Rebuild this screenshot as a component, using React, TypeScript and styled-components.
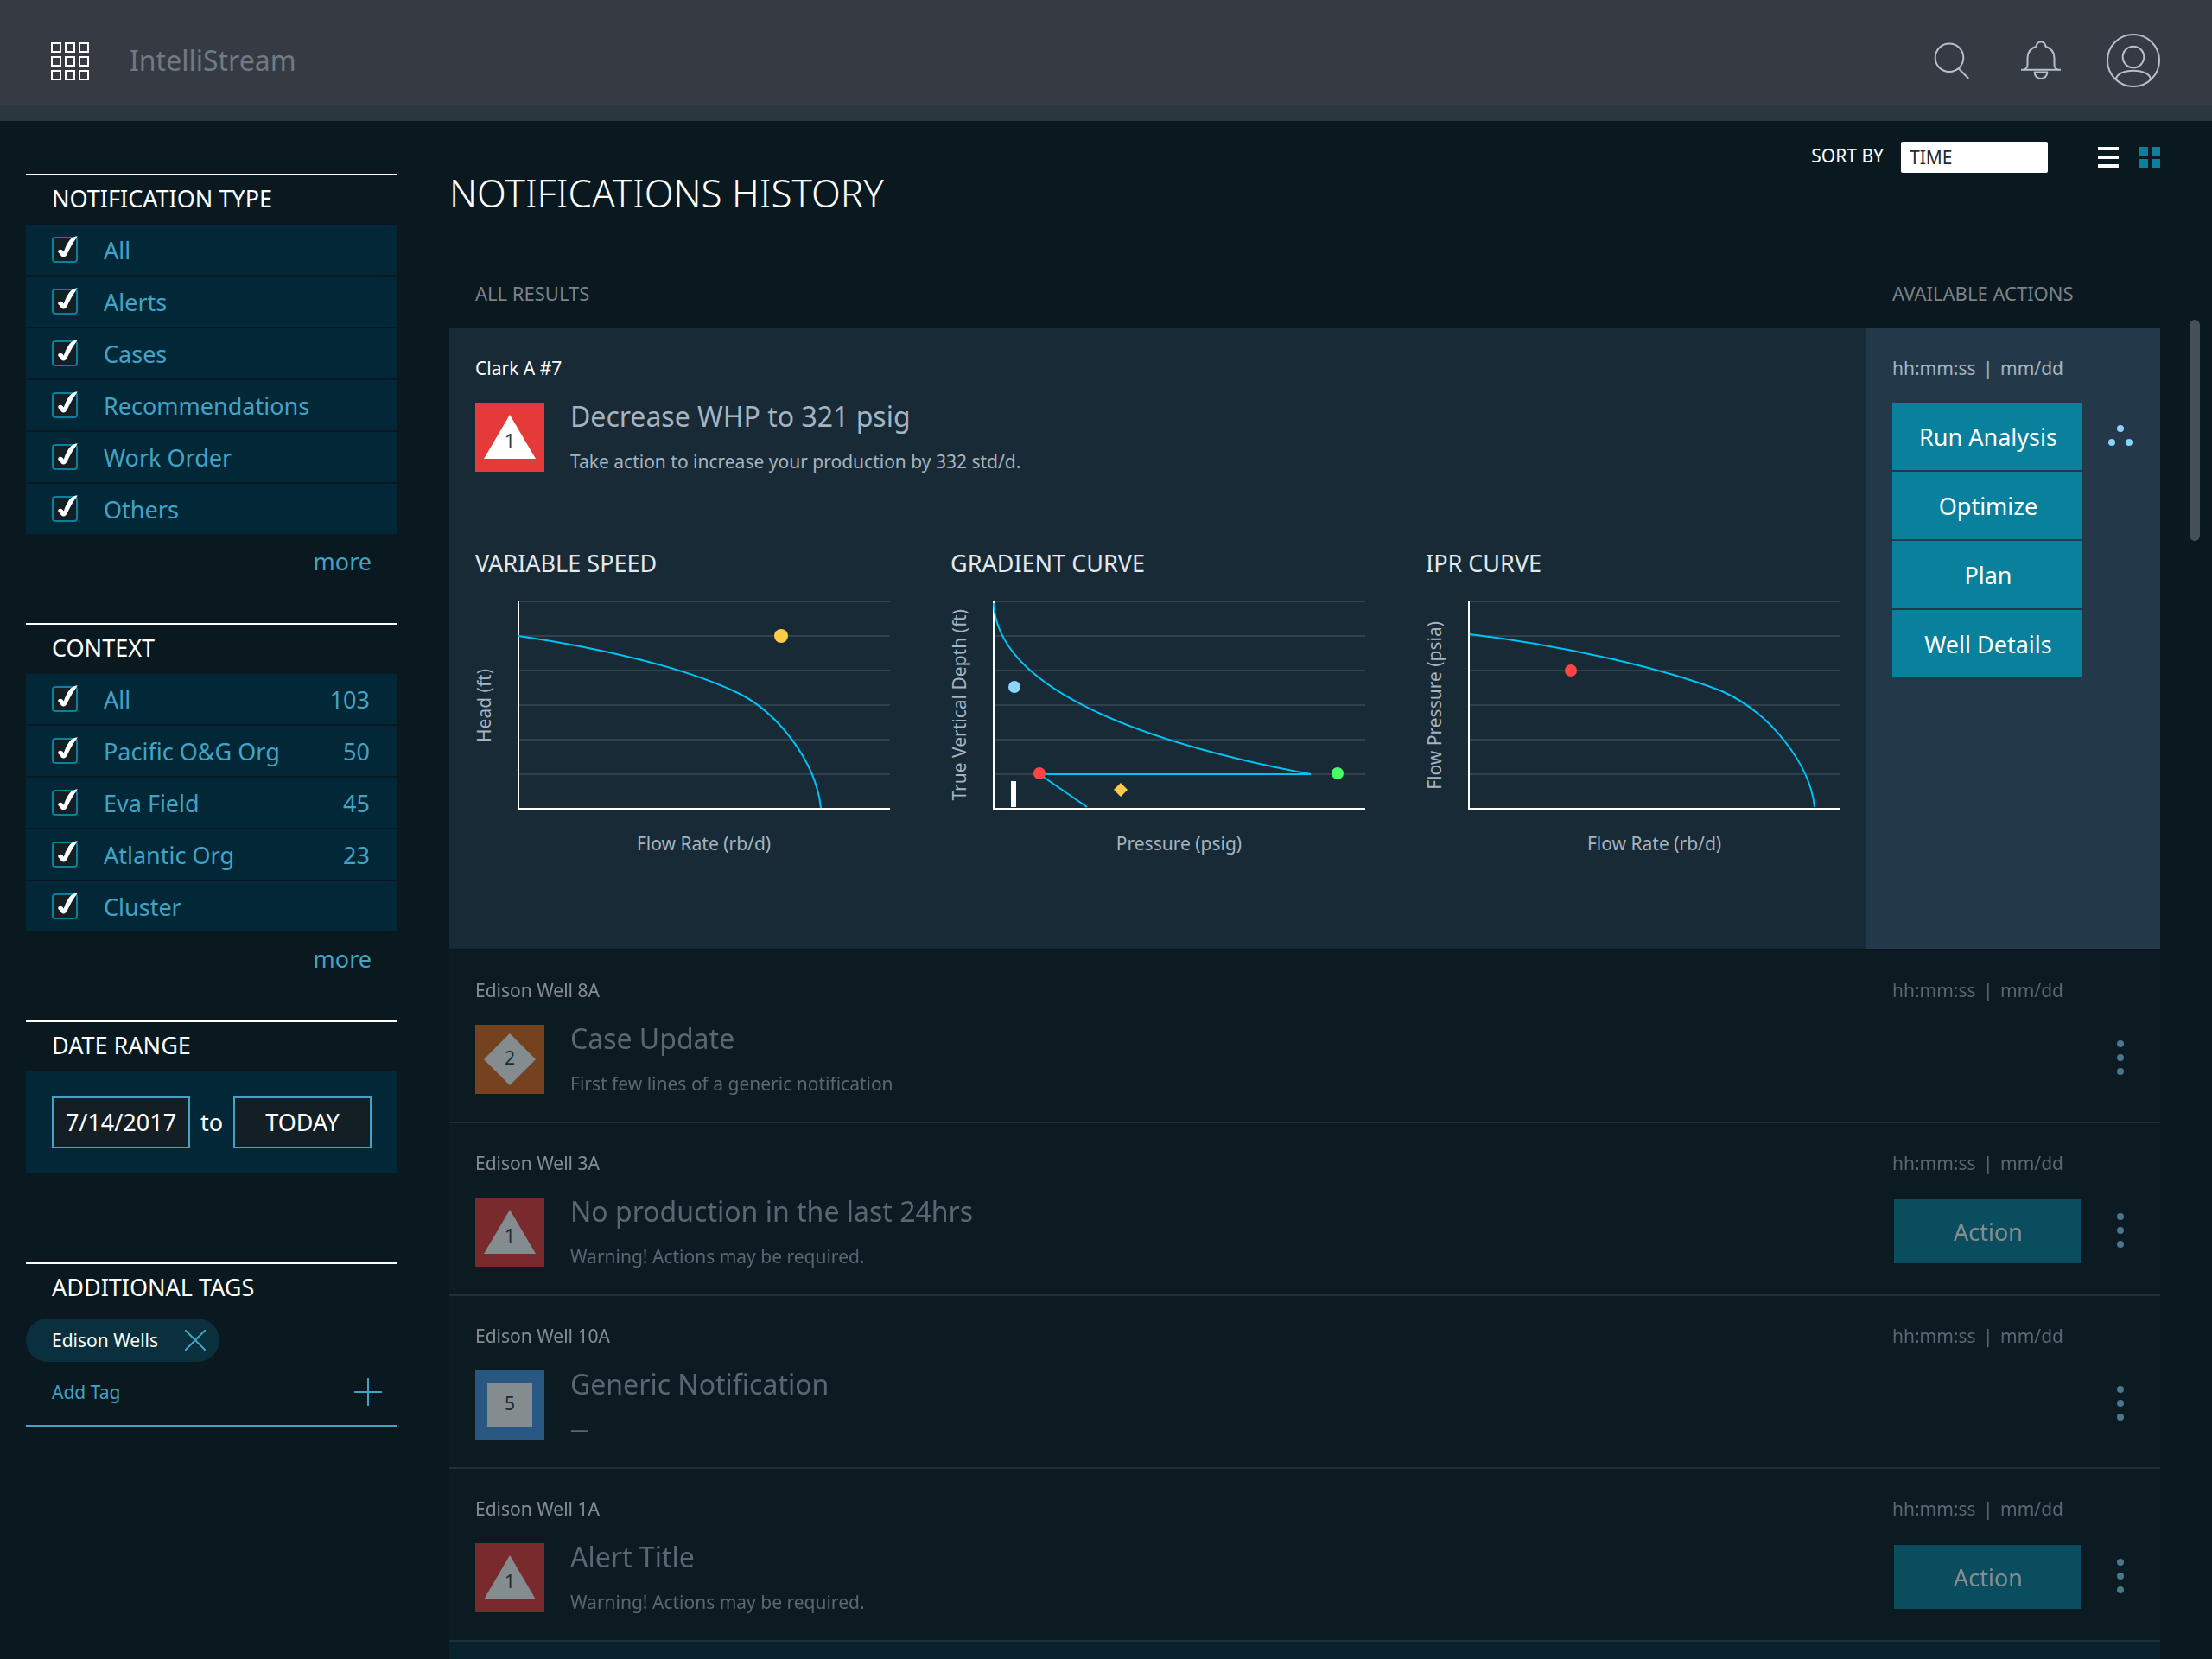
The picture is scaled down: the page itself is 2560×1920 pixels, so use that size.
import React from "react";
import styled, { createGlobalStyle } from "styled-components";

const color = {
  page: "#0a1820",
  row: "#0c1a21",
  line: "#1f2f3a",
  panel: "#022838",
  blue: "#42a3c5",
  teal: "#09809c",
  featured: "#182a36",
  featuredSide: "#23394a",
  muted: "#a5b4c0",
  heading: "#7c8287",
};

const GlobalStyle = createGlobalStyle`
  *, *::before, *::after { box-sizing: border-box; }
  body {
    margin: 0;
    background: ${color.page};
    color: #fff;
    font-family: "Noto Sans", "Open Sans", sans-serif;
    font-size: 21px;
    line-height: 32px;
  }
  button, input, select { font: inherit; color: inherit; }
  button { background: none; border: 0; padding: 0; cursor: pointer; }
  h1, h2, h3, p, ul { margin: 0; padding: 0; font-weight: 400; }
  ul { list-style: none; }
  a { color: inherit; text-decoration: none; }
  svg { display: block; }
`;

/* ---------- shell ---------- */

const Shell = styled.div`
  display: flex;
  flex-direction: column;
  min-height: 100vh;
`;

const TopBar = styled.header`
  display: flex;
  align-items: center;
  height: 140px;
  padding: 0 60px 0 59px;
  background: #363a42;
  border-bottom: 18px solid #2c3840;
`;

const Brand = styled.span`
  margin-left: 47px;
  padding-top: 18px;
  font-size: 32px;
  color: #6f7a81;
`;

const TopActions = styled.nav`
  display: flex;
  align-items: center;
  gap: 53px;
  margin-left: auto;
  padding-top: 18px;
`;

const AppsButton = styled.button`
  padding-top: 20px;
`;

const Body = styled.div`
  flex: 1;
  display: flex;
  gap: 60px;
  padding-left: 30px;
`;

/* ---------- sidebar ---------- */

const Sidebar = styled.aside`
  flex: none;
  width: 430px;
  padding-top: 61px;
`;

const Section = styled.section<{ $gap: number }>`
  border-top: 2px solid #fff;
  margin-bottom: ${(p) => p.$gap}px;
`;

const SectionTitle = styled.h2`
  height: 57px;
  padding: 11px 30px 0;
  font-size: 27px;
  color: #fff;
`;

const FilterList = styled.ul`
  display: grid;
  gap: 2px;
`;

const FilterRow = styled.label`
  display: flex;
  align-items: center;
  height: 58px;
  padding: 0 32px 0 30px;
  background: ${color.panel};
  color: ${color.blue};
  font-size: 27px;
  cursor: pointer;
`;

const FilterText = styled.span`
  padding-top: 2px;
`;

const FilterName = styled(FilterText)`
  flex: 1;
  margin-left: 30px;
`;

const CheckWrap = styled.span`
  position: relative;
  width: 30px;
  height: 30px;

  svg {
    position: absolute;
    inset: 0;
    overflow: visible;
    pointer-events: none;
  }
  input:not(:checked) + svg { display: none; }
`;

const Check = styled.input`
  appearance: none;
  display: block;
  width: 30px;
  height: 30px;
  margin: 0;
  border: 2px solid ${color.teal};
  border-radius: 4px;
  background: #141e25;
`;

const MoreRow = styled.div`
  display: flex;
  align-items: center;
  justify-content: flex-end;
  height: 62px;
  padding: 2px 30px 0;
  font-size: 27px;
  color: ${color.blue};
`;

const DatePanel = styled.div`
  display: flex;
  align-items: center;
  justify-content: space-between;
  padding: 29px 30px;
  background: ${color.panel};
  font-size: 27px;
`;

const DateInput = styled.input`
  width: 160px;
  height: 60px;
  padding: 0 0 2px;
  border: 2px solid ${color.blue};
  border-radius: 0;
  background: #141e25;
  text-align: center;
`;

const Tag = styled.span`
  display: inline-flex;
  align-items: center;
  gap: 31px;
  height: 50px;
  margin-top: 6px;
  padding: 0 16px 0 30px;
  border-radius: 25px;
  background: #0b303d;
`;

const AddTag = styled.button`
  display: flex;
  align-items: center;
  justify-content: space-between;
  width: 100%;
  height: 75px;
  padding: 0 18px 4px 30px;
  border-bottom: 2px solid ${color.blue};
  color: ${color.blue};
`;

/* ---------- main ---------- */

const Main = styled.main`
  flex: 1;
  display: flex;
  gap: 34px;
  padding: 24px 14px 0 0;
`;

const Content = styled.div`
  flex: 1;
  display: flex;
  flex-direction: column;
`;

const TitleRow = styled.div`
  display: flex;
  align-items: flex-start;
  justify-content: space-between;
`;

const PageTitle = styled.h1`
  margin-top: 32px;
  font-size: 44px;
  font-weight: 300;
  line-height: 54px;
`;

const Tools = styled.div`
  display: flex;
  align-items: center;
  height: 36px;
`;

const SortLabel = styled.label`
  padding-bottom: 4px;
`;

const SortSelect = styled.select`
  appearance: none;
  width: 170px;
  height: 36px;
  margin: 0 58px 0 20px;
  padding: 0 10px;
  border: 0;
  border-radius: 2px;
  background: #fff;
  color: #1b2a33;
`;

const ViewButton = styled.button<{ $active?: boolean }>`
  color: ${(p) => (p.$active ? color.teal : "#fff")};
  & + & { margin-left: 24px; }
`;

const ColumnHeads = styled.div`
  display: grid;
  grid-template-columns: 1fr 340px;
  padding: 73px 0 25px;
  font-size: 22px;
  color: ${color.heading};

  span { padding-left: 30px; }
`;

const ScrollTrack = styled.div`
  width: 12px;
  padding-top: 206px;
`;

const ScrollThumb = styled.div`
  height: 256px;
  border-radius: 6px;
  background: #454f56;
`;

const List = styled.ul`
  flex: 1;
  display: flex;
  flex-direction: column;
`;

const Item = styled.li<{ $featured?: boolean }>`
  background: ${(p) => (p.$featured ? color.featured : color.row)};
  border-bottom: 2px solid ${(p) => (p.$featured ? "#09161d" : color.line)};
`;

const ItemGrid = styled.article<{ $featured?: boolean }>`
  display: grid;
  grid-template-columns: 1fr 340px;
  opacity: ${(p) => (p.$featured ? 1 : 0.5)};
`;

const Details = styled.div`
  padding: 30px 30px 28px;
`;

const Source = styled.p`
  margin-bottom: 24px;
`;

const Summary = styled.div`
  display: flex;
  gap: 30px;
`;

const SummaryTitle = styled.h2`
  margin-bottom: 20px;
  font-size: 32px;
  color: ${color.muted};
`;

const SummaryText = styled.p`
  color: ${color.muted};
`;

const Actions = styled.div<{ $featured?: boolean }>`
  padding: 30px 2px 0 30px;
  background: ${(p) => (p.$featured ? color.featuredSide : "none")};
`;

const Stamp = styled.p`
  margin-bottom: 24px;
  color: ${color.muted};
`;

const Bar = styled.span`
  margin: 0 3px;
`;

const ActionRow = styled.div`
  display: flex;
  justify-content: space-between;
`;

const ButtonStack = styled.div`
  display: grid;
  gap: 2px;
  width: 220px;
`;

const ActionButton = styled.button<{ $outlined?: boolean }>`
  height: 78px;
  padding: 2px 0 0 2px;
  background: ${color.teal};
  border: ${(p) => (p.$outlined ? `2px solid ${color.row}` : "0")};
  font-size: 27px;
`;

const MenuButton = styled.button`
  display: grid;
  place-items: center;
  width: 88px;
  height: 78px;
`;

const NextItem = styled.li`
  flex: 1;
  min-height: 20px;
  background: #07222d;
`;

/* ---------- charts ---------- */

const Charts = styled.div`
  display: grid;
  grid-template-columns: repeat(3, 1fr);
  gap: 70px;
  padding: 86px 0 78px;
`;

const ChartTitle = styled.h3`
  margin-bottom: 27px;
  font-size: 27px;
  color: #e3e8ec;
`;

const Plot = styled.div`
  display: grid;
  grid-template-columns: 49px 1fr;
  row-gap: 23px;
  color: ${color.muted};

  svg { width: 100%; height: auto; overflow: visible; }
`;

const YLabel = styled.span`
  justify-self: start;
  align-self: center;
  writing-mode: vertical-rl;
  transform: rotate(180deg);
  line-height: 20px;
  white-space: nowrap;
`;

const XLabel = styled.span`
  grid-column: 2;
  text-align: center;
`;

/* ---------- icons ---------- */

const AppsIcon = () => (
  <svg width="44" height="44" fill="none" stroke="#fff" strokeWidth="2">
    {[1, 17, 33].map((y) =>
      [1, 17, 33].map((x) => <rect key={`${x}-${y}`} x={x} y={y} width="10" height="10" />)
    )}
  </svg>
);

const SearchIcon = () => (
  <svg width="48" height="44" viewBox="0 0 48 44" fill="none" stroke="#b4c1cd" strokeWidth="2" strokeLinecap="round">
    <circle cx="18" cy="18.7" r="16.3" />
    <path d="M28.7 31.3 39.7 42.3" />
  </svg>
);

const BellIcon = () => (
  <svg width="46" height="46" viewBox="0 0 46 46" fill="none" stroke="#b4c1cd" strokeWidth="2" strokeLinejoin="round">
    <path d="M0 33.7H46M3 33.7C6.5 33 7.5 31 7.5 27.5V20C7.5 13 12 8.5 17.5 6.7C18 3.5 20 1.5 23 1.5S28 3.5 28.5 6.7C34 8.5 38.5 13 38.5 20V27.5C38.5 31 39.5 33 43 33.7" />
    <path d="M15.7 36.5H30.3C30.3 41 27 44 23 44S15.7 41 15.7 36.5Z" />
  </svg>
);

const UserIcon = () => (
  <svg width="62" height="62" viewBox="0 0 62 62" fill="none" stroke="#b4c1cd" strokeWidth="2">
    <circle cx="31" cy="31" r="30" />
    <circle cx="31" cy="27" r="12.3" />
    <path d="M11 53C11 47 19.5 42.7 31 42.7S51 47 51 53" />
  </svg>
);

const ListIcon = () => (
  <svg width="24" height="24" fill="currentColor">
    <path d="M0 0H24V4H0ZM0 10H24V14H0ZM0 20H24V24H0Z" />
  </svg>
);

const GridIcon = () => (
  <svg width="24" height="24" fill="currentColor">
    <path d="M0 0H10V10H0ZM14 0H24V10H14ZM0 14H10V24H0ZM14 14H24V24H14Z" />
  </svg>
);

const CheckMark = () => (
  <svg width="30" height="30" viewBox="0 0 30 30" fill="#fff">
    <path d="M7.2 17C7.2 15 10.5 14 12 15.5C13 16.4 13.4 17 13.8 17.6C16 11.5 19 4 24 1C26 -.3 28.5 -.9 29.8 -.5C25.5 5 21.5 12 18 19.5C16.8 22 15.3 23.5 13.5 23.5C11.5 23.5 10.5 21.7 9.5 20.2C8.5 18.8 7.2 18.5 7.2 17Z" />
  </svg>
);

const CrossIcon = () => (
  <svg width="24" height="24" stroke={color.blue} strokeWidth="2">
    <path d="M0 0 24 24M24 0 0 24" />
  </svg>
);

const PlusIcon = () => (
  <svg width="32" height="32" stroke={color.blue} strokeWidth="2">
    <path d="M16 0V32M0 16H32" />
  </svg>
);

const DotsIcon = ({ spread }: { spread?: boolean }) => (
  <svg width="32" height="44" fill="#8bd3fb">
    {(spread ? [[16, 13], [6, 29], [26, 29]] : [[16, 5], [16, 21], [16, 37]]).map(([x, y]) => (
      <circle key={`${x}-${y}`} cx={x} cy={y} r="4" />
    ))}
  </svg>
);

type Kind = "alert" | "case" | "generic";

const badges: Record<Kind, { fill: string; shape: string; text: string; y: number }> = {
  alert: { fill: "#e53a3a", shape: "M40 14 70 65H10Z", text: "1", y: 52 },
  case: { fill: "#dc6a1d", shape: "M40 10 70 40 40 70 10 40Z", text: "2", y: 46 },
  generic: { fill: "#4494e5", shape: "M14 14H66V66H14Z", text: "5", y: 46 },
};

const Badge = ({ kind }: { kind: Kind }) => {
  const b = badges[kind];
  return (
    <svg width="80" height="80" viewBox="0 0 80 80">
      <rect width="80" height="80" fill={b.fill} />
      <path d={b.shape} fill="#fff" />
      <text x="40" y={b.y} textAnchor="middle" fontSize="21" fill="#2b3c47">{b.text}</text>
    </svg>
  );
};

/* ---------- data ---------- */

type Filter = { name: string; count?: number };

const types: Filter[] = ["All", "Alerts", "Cases", "Recommendations", "Work Order", "Others"].map((name) => ({ name }));

const contexts: Filter[] = [
  { name: "All", count: 103 },
  { name: "Pacific O&G Org", count: 50 },
  { name: "Eva Field", count: 45 },
  { name: "Atlantic Org", count: 23 },
  { name: "Cluster" },
];

type Notice = { source: string; kind: Kind; title: string; text: string; actions: string[] };

const featured: Notice = {
  source: "Clark A #7",
  kind: "alert",
  title: "Decrease WHP to 321 psig",
  text: "Take action to increase your production by 332 std/d.",
  actions: ["Run Analysis", "Optimize", "Plan", "Well Details"],
};

const notices: Notice[] = [
  { source: "Edison Well 8A", kind: "case", title: "Case Update", text: "First few lines of a generic notification", actions: [] },
  { source: "Edison Well 3A", kind: "alert", title: "No production in the last 24hrs", text: "Warning! Actions may be required.", actions: ["Action"] },
  { source: "Edison Well 10A", kind: "generic", title: "Generic Notification", text: "—", actions: [] },
  { source: "Edison Well 1A", kind: "alert", title: "Alert Title", text: "Warning! Actions may be required.", actions: ["Action"] },
];

const curve = { fill: "none", stroke: "#00c3f8", strokeWidth: 2 };

const charts = [
  {
    title: "VARIABLE SPEED",
    x: "Flow Rate (rb/d)",
    y: "Head (ft)",
    drawing: (
      <>
        <path {...curve} d="M1 41C90 54 190 76 255 107C300 129 345 185 351 240" />
        <circle cx="305" cy="41" r="8" fill="#ffcd44" />
      </>
    ),
  },
  {
    title: "GRADIENT CURVE",
    x: "Pressure (psig)",
    y: "True Vertical Depth (ft)",
    drawing: (
      <>
        <path {...curve} d="M1 3C5 95 150 160 368 201H54L109 239" />
        <circle cx="25" cy="100" r="7" fill="#8bd6ff" />
        <circle cx="54" cy="200" r="7" fill="#ff4444" />
        <circle cx="399" cy="200" r="7" fill="#44ff66" />
        <path d="M148 211 156 219 148 227 140 219Z" fill="#ffcd44" />
        <rect x="21" y="209" width="6" height="30" fill="#fff" />
      </>
    ),
  },
  {
    title: "IPR CURVE",
    x: "Flow Rate (rb/d)",
    y: "Flow Pressure (psia)",
    drawing: (
      <>
        <path {...curve} d="M2 39C110 52 225 78 294 105C350 130 396 190 401 239" />
        <circle cx="119" cy="81" r="7" fill="#ff4444" />
      </>
    ),
  },
];

/* ---------- composed parts ---------- */

const Filters = ({ title, items }: { title: string; items: Filter[] }) => (
  <Section $gap={41}>
    <SectionTitle>{title}</SectionTitle>
    <FilterList>
      {items.map((f) => (
        <li key={f.name}>
          <FilterRow>
            <CheckWrap>
              <Check type="checkbox" defaultChecked />
              <CheckMark />
            </CheckWrap>
            <FilterName>{f.name}</FilterName>
            {f.count !== undefined && <FilterText>{f.count}</FilterText>}
          </FilterRow>
        </li>
      ))}
    </FilterList>
    <MoreRow><a href="#more">more</a></MoreRow>
  </Section>
);

const ChartPanel = ({ chart }: { chart: (typeof charts)[number] }) => (
  <section>
    <ChartTitle>{chart.title}</ChartTitle>
    <Plot>
      <YLabel>{chart.y}</YLabel>
      <svg viewBox="0 0 431 242" role="img" aria-label={chart.title}>
        <path d="M1 1H431M1 41H431M1 81H431M1 121H431M1 161H431M1 201H431" stroke="#30424d" strokeWidth="2" />
        <path d="M1 0V241H431" fill="none" stroke="#fff" strokeWidth="2" />
        {chart.drawing}
      </svg>
      <XLabel>{chart.x}</XLabel>
    </Plot>
  </section>
);

const NoticeItem = ({ notice, isFeatured }: { notice: Notice; isFeatured?: boolean }) => (
  <Item $featured={isFeatured}>
    <ItemGrid $featured={isFeatured}>
      <Details>
        <Source>{notice.source}</Source>
        <Summary>
          <Badge kind={notice.kind} />
          <div>
            <SummaryTitle>{notice.title}</SummaryTitle>
            <SummaryText>{notice.text}</SummaryText>
          </div>
        </Summary>
        {isFeatured && (
          <Charts>
            {charts.map((c) => <ChartPanel key={c.title} chart={c} />)}
          </Charts>
        )}
      </Details>
      <Actions $featured={isFeatured}>
        <Stamp>hh:mm:ss <Bar>|</Bar> mm/dd</Stamp>
        <ActionRow>
          <ButtonStack>
            {notice.actions.map((a) => (
              <ActionButton key={a} $outlined={!isFeatured}>{a}</ActionButton>
            ))}
          </ButtonStack>
          <MenuButton aria-label="Actions menu"><DotsIcon spread={isFeatured} /></MenuButton>
        </ActionRow>
      </Actions>
    </ItemGrid>
  </Item>
);

export default function App() {
  return (
    <Shell>
      <GlobalStyle />
      <TopBar>
        <AppsButton aria-label="Applications"><AppsIcon /></AppsButton>
        <Brand>IntelliStream</Brand>
        <TopActions>
          <button aria-label="Search"><SearchIcon /></button>
          <button aria-label="Alerts"><BellIcon /></button>
          <button aria-label="Account"><UserIcon /></button>
        </TopActions>
      </TopBar>
      <Body>
        <Sidebar>
          <Filters title="NOTIFICATION TYPE" items={types} />
          <Filters title="CONTEXT" items={contexts} />
          <Section $gap={103}>
            <SectionTitle>DATE RANGE</SectionTitle>
            <DatePanel>
              <DateInput aria-label="From date" defaultValue="7/14/2017" />
              <span>to</span>
              <DateInput aria-label="To date" defaultValue="TODAY" />
            </DatePanel>
          </Section>
          <Section $gap={0}>
            <SectionTitle>ADDITIONAL TAGS</SectionTitle>
            <Tag>
              Edison Wells
              <button aria-label="Remove tag"><CrossIcon /></button>
            </Tag>
            <AddTag>Add Tag<PlusIcon /></AddTag>
          </Section>
        </Sidebar>
        <Main>
          <Content>
            <TitleRow>
              <PageTitle>NOTIFICATIONS HISTORY</PageTitle>
              <Tools>
                <SortLabel htmlFor="sort">SORT BY</SortLabel>
                <SortSelect id="sort"><option>TIME</option></SortSelect>
                <ViewButton aria-label="List view"><ListIcon /></ViewButton>
                <ViewButton aria-label="Grid view" $active><GridIcon /></ViewButton>
              </Tools>
            </TitleRow>
            <ColumnHeads>
              <span>ALL RESULTS</span>
              <span>AVAILABLE ACTIONS</span>
            </ColumnHeads>
            <List>
              <NoticeItem notice={featured} isFeatured />
              {notices.map((n) => <NoticeItem key={n.source} notice={n} />)}
              <NextItem />
            </List>
          </Content>
          <ScrollTrack><ScrollThumb /></ScrollTrack>
        </Main>
      </Body>
    </Shell>
  );
}
